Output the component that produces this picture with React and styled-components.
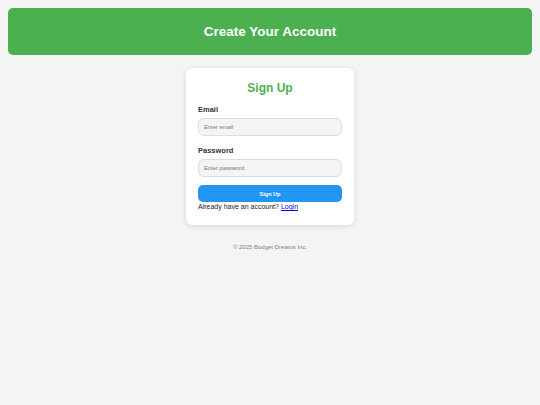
import React from "react";
import styled, { createGlobalStyle } from "styled-components";

const GlobalStyle = createGlobalStyle`
  body {
    margin: 8px;
    background: #f4f4f4;
    font-family: "Liberation Sans", Arial, sans-serif;
  }
`;

const Header = styled.header`
  background: #4caf50;
  color: #fff;
  border-radius: 5px;
  height: 47px;
  display: flex;
  align-items: center;
  justify-content: center;
  font-size: 13.5px;
  font-weight: bold;
  padding-bottom: 1px;
  box-sizing: border-box;
`;

const Card = styled.div`
  width: 168px;
  margin: 13px auto 0;
  background: #fff;
  border-radius: 6px;
  box-shadow: 0 1px 6px rgba(0, 0, 0, 0.12);
  padding: 12px 12px 15px;
  box-sizing: border-box;
`;

const Title = styled.h2`
  margin: 1px 0 10px;
  text-align: center;
  color: #4caf50;
  font-size: 12px;
`;

const Label = styled.label`
  display: block;
  font-size: 7.5px;
  font-weight: bold;
  color: #333;
  margin-bottom: 4px;
`;

const Input = styled.input`
  display: block;
  width: 100%;
  height: 18px;
  box-sizing: border-box;
  border: 1px solid #ddd;
  border-radius: 6px;
  background: #f4f4f4;
  padding: 0 5px;
  font-size: 5.8px;
  font-family: inherit;
  margin-bottom: 10px;
  outline: none;
  &::placeholder {
    color: #777;
  }
`;

const Button = styled.button`
  display: block;
  width: 100%;
  height: 17px;
  border: none;
  border-radius: 5px;
  background: #2196f3;
  color: #fff;
  font-weight: bold;
  font-size: 5.5px;
  font-family: inherit;
  margin-top: -2px;
`;

const Note = styled.p`
  margin: 1px 0 0;
  font-size: 7px;
  color: #222;
`;

const LoginLink = styled.a`
  color: #0000ee;
  text-decoration: underline;
`;

const Footer = styled.footer`
  text-align: center;
  font-size: 6px;
  color: #808080;
  margin-top: 19px;
`;

export default function App() {
  return (
    <>
      <GlobalStyle />
      <Header>Create Your Account</Header>
      <Card>
        <Title>Sign Up</Title>
        <Label>Email</Label>
        <Input type="email" placeholder="Enter email" />
        <Label>Password</Label>
        <Input type="password" placeholder="Enter password" />
        <Button>Sign Up</Button>
        <Note>
          Already have an account? <LoginLink href="#">Login</LoginLink>
        </Note>
      </Card>
      <Footer>© 2025 Budget Dreams Inc.</Footer>
    </>
  );
}
